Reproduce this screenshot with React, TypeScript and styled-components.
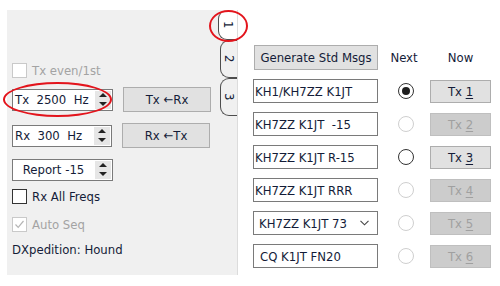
import React from 'react';
import styled, { createGlobalStyle } from 'styled-components';

const Global = createGlobalStyle`
  html, body { margin: 0; padding: 0; background: #ffffff; }
  body {
    font-family: "DejaVu Sans Condensed", "DejaVu Sans", sans-serif;
    font-stretch: condensed;
    font-size: 13px;
    color: #141c38;
  }
`;

const Page = styled.div`
  position: relative;
  width: 500px;
  height: 286px;
  box-sizing: border-box;
  padding: 10px 0 0 7px;
  display: flex;
  align-items: flex-start;
  gap: 15px;
`;

const Panel = styled.div`
  width: 231px;
  height: 265px;
  box-sizing: border-box;
  background: #f0f0f0;
  border-right: 1px solid #dcdcdc;
  display: flex;
`;

const Controls = styled.div`
  flex: 1;
  display: flex;
  flex-direction: column;
  padding: 53px 0 0 5px;
`;

const CheckRow = styled.label<{ $mt?: number }>`
  display: flex;
  align-items: center;
  gap: 5px;
  height: 15px;
  margin-top: ${p => p.$mt ?? 0}px;
`;

const Box = styled.span<{ $disabled?: boolean }>`
  width: 15px;
  height: 15px;
  box-sizing: border-box;
  background: #fff;
  border: 1px solid ${p => (p.$disabled ? '#c9c9c9' : '#333')};
  display: flex;
  align-items: center;
  justify-content: center;
`;

const CheckText = styled.span<{ $disabled?: boolean }>`
  color: ${p => (p.$disabled ? '#a3a3a3' : '#141c38')};
  line-height: 15px;
`;

const Row = styled.div<{ $mt: number }>`
  display: flex;
  align-items: center;
  gap: 10px;
  height: 25px;
  margin-top: ${p => p.$mt}px;
`;

const Spin = styled.div<{ $w?: number }>`
  width: ${p => p.$w ?? 101}px;
  height: 22px;
  box-sizing: border-box;
  background: #fff;
  border: 1px solid #7a7a7a;
  display: flex;
  align-items: stretch;
`;

const SpinText = styled.div<{ $center?: boolean }>`
  flex: 1;
  display: flex;
  align-items: center;
  justify-content: ${p => (p.$center ? 'center' : 'flex-start')};
  padding-left: ${p => (p.$center ? 0 : 2)}px;
  white-space: pre;
`;

const SpinButtons = styled.div`
  width: 16px;
  margin: 1px;
  background: #e6e6e6;
  display: flex;
  flex-direction: column;
  gap: 1px;
`;

const SpinHalf = styled.div`
  flex: 1;
  display: flex;
  align-items: center;
  justify-content: center;
`;

const Arrow = styled.span<{ $down?: boolean }>`
  width: 0;
  height: 0;
  border-left: 4px solid transparent;
  border-right: 4px solid transparent;
  ${p => (p.$down ? 'border-top: 4px solid #222;' : 'border-bottom: 4px solid #222;')}
`;

const Button = styled.button<{ $w: number; $h?: number; $disabled?: boolean }>`
  width: ${p => p.$w}px;
  height: ${p => p.$h ?? 25}px;
  box-sizing: border-box;
  padding: 0;
  font: inherit;
  color: ${p => (p.$disabled ? '#a0a0a0' : '#141c38')};
  background: ${p => (p.$disabled ? '#cccccc' : '#e1e1e1')};
  border: 1px solid ${p => (p.$disabled ? '#bfbfbf' : '#adadad')};
  display: flex;
  align-items: center;
  justify-content: center;
  white-space: pre;
`;

const Note = styled.div`
  margin-top: 9px;
  line-height: 18px;
`;

const TabBar = styled.div`
  width: 19px;
  display: flex;
  flex-direction: column;
`;

const Tab = styled.div<{ $active?: boolean; $h: number }>`
  height: ${p => p.$h}px;
  box-sizing: border-box;
  margin-left: ${p => (p.$active ? 0 : 2)}px;
  background: ${p => (p.$active ? '#ffffff' : '#f0f0f0')};
  border: 1px solid #4d4d4d;
  border-right: none;
  border-top-color: ${p => (p.$active ? 'transparent' : '#4d4d4d')};
  border-radius: 9px 0 0 9px;
  display: flex;
  align-items: center;
  justify-content: center;
`;

const TabLabel = styled.span`
  writing-mode: vertical-rl;
  font-size: 13px;
  line-height: 13px;
`;

const Right = styled.div`
  margin-top: 35px;
  display: grid;
  grid-template-columns: 125px 52px 61px;
  grid-template-rows: 25px repeat(6, 24px);
  row-gap: 9px;
  align-items: center;
`;

const HeadText = styled.div`
  text-align: center;
`;

const Field = styled.div<{ $pad?: number }>`
  height: 24px;
  box-sizing: border-box;
  background: #fff;
  border: 1px solid #7a7a7a;
  display: flex;
  align-items: center;
  padding-left: ${p => p.$pad ?? 1}px;
  padding-right: 8px;
  white-space: pre;
`;

const Grow = styled.span`
  flex: 1;
`;

const Radio = styled.span<{ $checked?: boolean; $disabled?: boolean }>`
  justify-self: start;
  margin-left: 20px;
  width: 16px;
  height: 16px;
  box-sizing: border-box;
  border-radius: 50%;
  background: #fff;
  border: 1px solid ${p => (p.$disabled ? '#cfcfcf' : '#333')};
  display: flex;
  align-items: center;
  justify-content: center;
  &::after {
    content: '';
    width: 8px;
    height: 8px;
    border-radius: 50%;
    background: ${p => (p.$checked ? '#1e1e1e' : 'transparent')};
  }
`;

const TxCell = styled.div`
  display: flex;
  justify-content: flex-end;
`;

const U = styled.span`
  text-decoration: underline;
  text-underline-offset: 2px;
`;

const Ellipse = styled.div<{ $x: number; $y: number; $w: number; $h: number }>`
  position: absolute;
  left: ${p => p.$x}px;
  top: ${p => p.$y}px;
  width: ${p => p.$w}px;
  height: ${p => p.$h}px;
  box-sizing: border-box;
  border: 2px solid #e3141c;
  border-radius: 50%;
  pointer-events: none;
`;

const Check = ({ color }: { color: string }) => (
  <svg width="11" height="11" viewBox="0 0 11 11">
    <polyline points="1.5,5.5 4.2,8.3 9.5,2" fill="none" stroke={color} strokeWidth="1.2" />
  </svg>
);

const Chevron = () => (
  <svg width="9" height="6" viewBox="0 0 9 6">
    <polyline points="0.5,0.8 4.5,4.8 8.5,0.8" fill="none" stroke="#444" strokeWidth="1.1" />
  </svg>
);

const SpinBox = ({ text, w, center }: { text: string; w?: number; center?: boolean }) => (
  <Spin $w={w}>
    <SpinText $center={center}>{text}</SpinText>
    <SpinButtons>
      <SpinHalf><Arrow /></SpinHalf>
      <SpinHalf><Arrow $down /></SpinHalf>
    </SpinButtons>
  </Spin>
);

const messages = [
  { text: 'KH1/KH7ZZ K1JT', pad: 1 },
  { text: 'KH7ZZ K1JT  -15', pad: 1 },
  { text: 'KH7ZZ K1JT R-15', pad: 1 },
  { text: 'KH7ZZ K1JT RRR', pad: 1 },
  { text: 'KH7ZZ K1JT 73', pad: 5, combo: true },
  { text: 'CQ K1JT FN20', pad: 6 },
];

const rowState = [
  { checked: true, disabled: false, txEnabled: true },
  { checked: false, disabled: true, txEnabled: false },
  { checked: false, disabled: false, txEnabled: true },
  { checked: false, disabled: true, txEnabled: false },
  { checked: false, disabled: true, txEnabled: false },
  { checked: false, disabled: true, txEnabled: false },
];

export default function App() {
  return (
    <>
      <Global />
      <Page>
        <Panel>
          <Controls>
            <CheckRow>
              <Box $disabled />
              <CheckText $disabled>Tx even/1st</CheckText>
            </CheckRow>
            <Row $mt={9}>
              <SpinBox text="Tx  2500  Hz" />
              <Button $w={88}>Tx ←Rx</Button>
            </Row>
            <Row $mt={11}>
              <SpinBox text="Rx  300  Hz" w={100} />
              <Button $w={88}>Rx ←Tx</Button>
            </Row>
            <Row $mt={9}>
              <SpinBox text="Report -15" center />
            </Row>
            <CheckRow $mt={7}>
              <Box />
              <CheckText>Rx All Freqs</CheckText>
            </CheckRow>
            <CheckRow $mt={13}>
              <Box $disabled>
                <Check color="#b5b5b5" />
              </Box>
              <CheckText $disabled>Auto Seq</CheckText>
            </CheckRow>
            <Note>DXpedition: Hound</Note>
          </Controls>
          <TabBar>
            <Tab $active $h={30}><TabLabel>1</TabLabel></Tab>
            <Tab $h={38}><TabLabel>2</TabLabel></Tab>
            <Tab $h={38}><TabLabel>3</TabLabel></Tab>
          </TabBar>
        </Panel>
        <Right>
          <TxCell>
            <Button $w={124}>Generate Std Msgs</Button>
          </TxCell>
          <HeadText>Next</HeadText>
          <HeadText>Now</HeadText>
          {messages.map((m, i) => (
            <React.Fragment key={i}>
              <Field $pad={m.pad}>
                <Grow>{m.text}</Grow>
                {m.combo && <Chevron />}
              </Field>
              <Radio $checked={rowState[i].checked} $disabled={rowState[i].disabled} />
              <TxCell>
                <Button $w={61} $h={23} $disabled={!rowState[i].txEnabled}>
                  Tx <U>{i + 1}</U>
                </Button>
              </TxCell>
            </React.Fragment>
          ))}
        </Right>
        <Ellipse $x={209} $y={10} $w={39} $h={32} />
        <Ellipse $x={3} $y={82} $w={109} $h={35} />
      </Page>
    </>
  );
}
